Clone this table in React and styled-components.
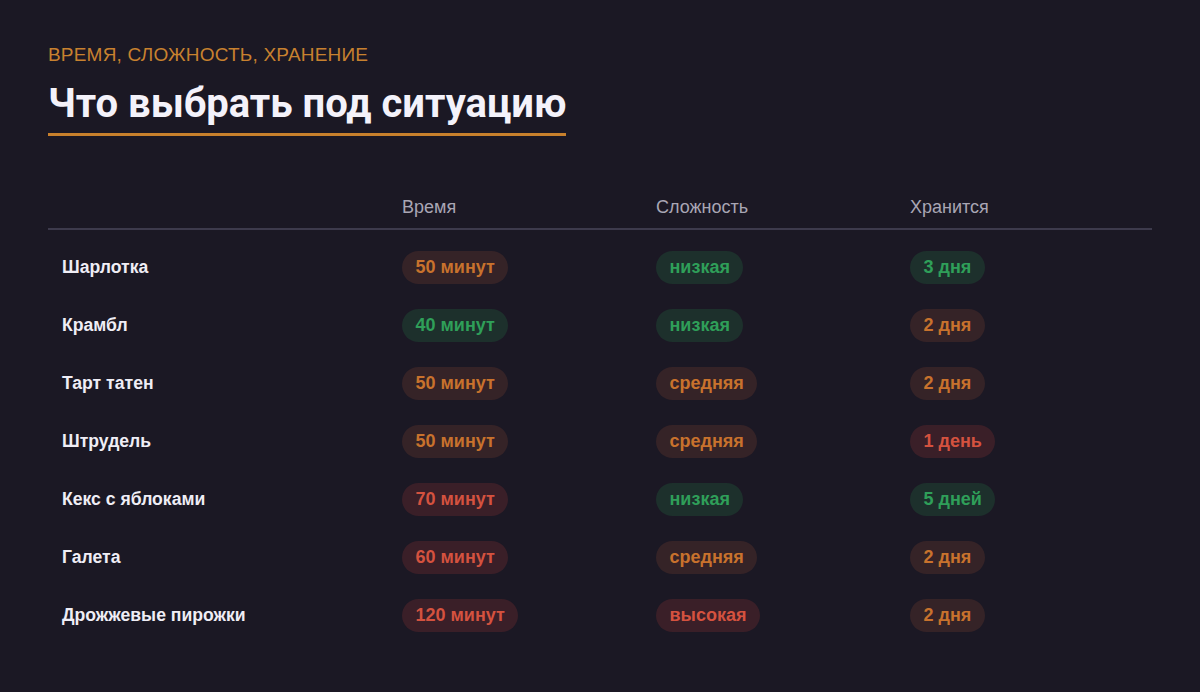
import React from "react";
import styled, { createGlobalStyle } from "styled-components";

const Global = createGlobalStyle`
  html, body { margin: 0; padding: 0; background: #1b1824; }
  body { font-family: "Liberation Sans", Arial, sans-serif; }
`;

const Page = styled.div`
  min-height: 692px;
  box-sizing: border-box;
  padding: 44px 48px 40px;
  background: #1b1824;
`;

const Eyebrow = styled.div`
  color: #c8812f;
  font-size: 19px;
  letter-spacing: 0.2px;
  text-transform: uppercase;
  line-height: 22px;
`;

const Title = styled.h1`
  display: inline-block;
  margin: 14px 0 0;
  padding-bottom: 5px;
  border-bottom: 3px solid #c8802c;
  color: #f4f2fa;
  font-family: Roboto, "Liberation Sans", sans-serif;
  font-size: 40px;
  font-weight: 700;
  line-height: 48px;
`;

const Table = styled.div`
  margin-top: 48px;
  display: grid;
  grid-template-columns: 340px 254px 254px 1fr;
`;

const HeadCell = styled.div`
  padding: 12px 14px 10px;
  margin-bottom: 8px;
  color: #a9a6b4;
  font-size: 18px;
  line-height: 22px;
  border-bottom: 2px solid #3d3a4c;
`;

const NameCell = styled.div`
  padding: 0 14px;
  height: 58px;
  display: flex;
  align-items: center;
  color: #efedf5;
  font-size: 17.6px;
  font-weight: 700;
`;

const Cell = styled.div`
  padding: 0 14px;
  height: 58px;
  display: flex;
  align-items: center;
`;

const tones = {
  orange: { fg: "#c8722d", bg: "#352327" },
  green: { fg: "#2f9f59", bg: "#1d302c" },
  red: { fg: "#d4523f", bg: "#3a1f28" },
};

const Pill = styled.span`
  display: inline-flex;
  align-items: center;
  height: 33px;
  padding: 0 13.5px;
  border-radius: 17px;
  font-size: 18px;
  font-weight: 700;
  color: ${(p) => tones[p.$tone].fg};
  background: ${(p) => tones[p.$tone].bg};
`;

const rows = [
  ["Шарлотка", ["50 минут", "orange"], ["низкая", "green"], ["3 дня", "green"]],
  ["Крамбл", ["40 минут", "green"], ["низкая", "green"], ["2 дня", "orange"]],
  ["Тарт татен", ["50 минут", "orange"], ["средняя", "orange"], ["2 дня", "orange"]],
  ["Штрудель", ["50 минут", "orange"], ["средняя", "orange"], ["1 день", "red"]],
  ["Кекс с яблоками", ["70 минут", "red"], ["низкая", "green"], ["5 дней", "green"]],
  ["Галета", ["60 минут", "red"], ["средняя", "orange"], ["2 дня", "orange"]],
  ["Дрожжевые пирожки", ["120 минут", "red"], ["высокая", "red"], ["2 дня", "orange"]],
];

export default function App() {
  return (
    <Page>
      <Global />
      <Eyebrow>Время, сложность, хранение</Eyebrow>
      <Title>Что выбрать под ситуацию</Title>
      <Table>
        <HeadCell />
        <HeadCell>Время</HeadCell>
        <HeadCell>Сложность</HeadCell>
        <HeadCell>Хранится</HeadCell>
        {rows.map(([name, ...cells]) => (
          <React.Fragment key={name}>
            <NameCell>{name}</NameCell>
            {cells.map(([text, tone], i) => (
              <Cell key={i}>
                <Pill $tone={tone}>{text}</Pill>
              </Cell>
            ))}
          </React.Fragment>
        ))}
      </Table>
    </Page>
  );
}
